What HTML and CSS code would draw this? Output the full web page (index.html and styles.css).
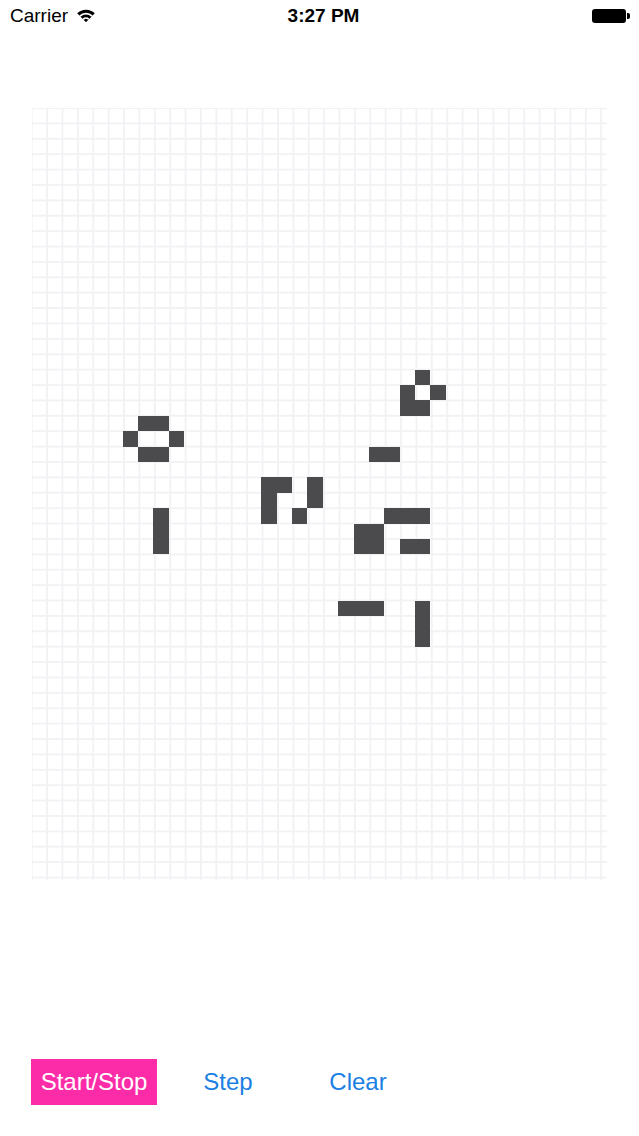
FILE: index.html
```html
<!DOCTYPE html>
<html lang="en">
<head>
<meta charset="utf-8">
<title>Life</title>
<link rel="stylesheet" href="styles.css">
</head>
<body>
<div class="screen">
  <header class="status">
    <div class="status-left">
      <span class="carrier">Carrier</span>
      <svg class="wifi" width="18" height="13" viewBox="0 0 18 13">
        <path d="M9 13 L0.2 4.3 A12.5 12.5 0 0 1 17.8 4.3 Z" fill="#000"/>
        <path d="M9 13 L2.3 6.4 A9.5 9.5 0 0 1 15.7 6.4 Z" fill="#fff"/>
        <path d="M9 13 L3.6 7.7 A7.6 7.6 0 0 1 14.4 7.7 Z" fill="#000"/>
        <path d="M9 13 L5.6 9.7 A4.8 4.8 0 0 1 12.4 9.7 Z" fill="#fff"/>
        <path d="M9 13 L6.9 10.9 A3 3 0 0 1 11.1 10.9 Z" fill="#000"/>
      </svg>
    </div>
    <div class="time">3:27 PM</div>
    <div class="status-right">
      <div class="battery"><div class="battery-body"></div><div class="battery-nub"></div></div>
    </div>
  </header>

  <main class="board-wrap">
    <div class="board">
      <div class="live" style="grid-area:21/8/22/10"></div>
      <div class="live" style="grid-area:22/7/23/8"></div>
      <div class="live" style="grid-area:22/10/23/11"></div>
      <div class="live" style="grid-area:23/8/24/10"></div>

      <div class="live" style="grid-area:27/9/30/10"></div>

      <div class="live" style="grid-area:18/26/19/27"></div>
      <div class="live" style="grid-area:19/25/21/26"></div>
      <div class="live" style="grid-area:19/27/20/28"></div>
      <div class="live" style="grid-area:20/26/21/27"></div>

      <div class="live" style="grid-area:23/23/24/25"></div>

      <div class="live" style="grid-area:25/16/28/17"></div>
      <div class="live" style="grid-area:25/17/26/18"></div>
      <div class="live" style="grid-area:25/19/27/20"></div>
      <div class="live" style="grid-area:27/18/28/19"></div>

      <div class="live" style="grid-area:27/24/28/27"></div>
      <div class="live" style="grid-area:28/22/30/24"></div>
      <div class="live" style="grid-area:29/25/30/27"></div>

      <div class="live" style="grid-area:33/21/34/24"></div>
      <div class="live" style="grid-area:33/26/36/27"></div>
    </div>
  </main>

  <footer class="controls">
    <button class="btn btn-primary">Start/Stop</button>
    <button class="btn btn-step">Step</button>
    <button class="btn">Clear</button>
  </footer>
</div>
</body>
</html>
```

FILE: styles.css
```css
html, body {
  margin: 0;
  padding: 0;
  background: #ffffff;
}

.screen {
  width: 639px;
  height: 1136px;
  display: flex;
  flex-direction: column;
  font-family: "Liberation Sans", Arial, sans-serif;
  color: #000;
  overflow: hidden;
}

.status {
  height: 32px;
  display: grid;
  grid-template-columns: 1fr auto 1fr;
  align-items: center;
  padding: 0 9px 0 10px;
  font-size: 19px;
}

.status-left {
  display: flex;
  align-items: center;
  gap: 9px;
}

.carrier {
  line-height: 32px;
}

.wifi {
  display: block;
  margin-top: -2px;
}

.time {
  font-weight: bold;
  padding-left: 7px;
  line-height: 32px;
}

.status-right {
  display: flex;
  justify-content: flex-end;
}

.battery {
  display: flex;
  align-items: center;
}

.battery-body {
  width: 34px;
  height: 14px;
  background: #000;
  border-radius: 3px;
}

.battery-nub {
  width: 3px;
  height: 6px;
  background: #000;
  border-radius: 0 2px 2px 0;
  margin-left: 1px;
}

.board-wrap {
  margin-top: 76px;
  padding-left: 30.3px;
  height: 772px;
}

.board {
  width: 577px;
  height: 772px;
  overflow: hidden;
  display: grid;
  grid-template-columns: repeat(38, 15.4px);
  grid-template-rows: repeat(51, 15.4px);
  background-color: #ffffff;
  background-image:
    linear-gradient(to right, #f4f1f5 0, #f4f1f5 1.3px, transparent 1.3px, transparent 14.1px, #f4f1f5 14.1px),
    linear-gradient(to bottom, #f4f1f5 0, #f4f1f5 1.3px, transparent 1.3px, transparent 14.1px, #f4f1f5 14.1px);
  background-size: 15.4px 15.4px;
  background-position: 1.7px 0;
  clip-path: inset(0 0 0 1.7px);
}

.live {
  background: #4b4b4d;
}

.controls {
  margin-top: 179px;
  display: flex;
  gap: 6px;
  padding-left: 31px;
}

.btn {
  width: 126px;
  height: 46px;
  border: 0;
  padding: 0;
  margin: 0;
  background: transparent;
  font-family: "Liberation Sans", Arial, sans-serif;
  font-size: 24px;
  color: #1b7fe3;
  cursor: pointer;
}

.btn-step {
  padding-left: 4px;
}

.btn-primary {
  background: #fc2ca9;
  color: #ffffff;
}
```
